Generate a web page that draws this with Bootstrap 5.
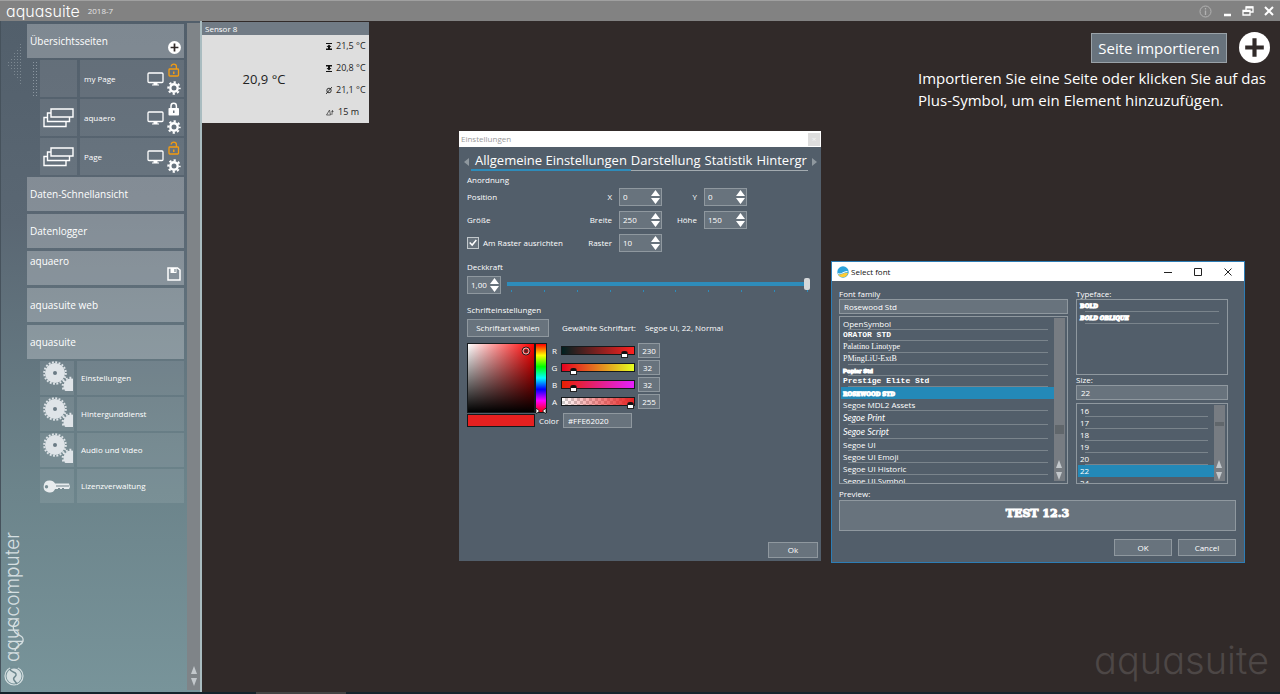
<!DOCTYPE html>
<html lang="de">
<head>
<meta charset="utf-8">
<meta name="viewport" content="width=device-width, initial-scale=1">
<title>aquasuite 2018-7</title>
<link href="https://cdn.jsdelivr.net/npm/bootstrap@5.3.0/dist/css/bootstrap.min.css" rel="stylesheet">
<style>
:root{--panel:#525e6a;--field:#68737d;--edge:#8f989f;--blue:#2e8cba}
body{font-family:"Open Sans","Noto Sans",sans-serif;font-size:8px;line-height:12px;color:#fff;background:#312a29;height:100vh;overflow:hidden}
button,input{font:inherit;color:inherit;border-radius:0}
button{background:none;border:0;padding:0}
svg{display:block;flex:none}
a{color:inherit;text-decoration:none}
.brand{font-family:Inter,Lato,sans-serif;font-feature-settings:"cv11";font-weight:300}
.titlebar{height:21px;background:#828282;border-top:1px solid #a0a0a0;padding:0 5px 0 6px}
.titlebar .brand{font-size:16px;line-height:18px}
.titlebar .ver{font-size:8px;color:#e4e4e4}

/* sidebar */
.side{width:202px;background:linear-gradient(#525f6b,#5a6773 30%,#6c848b 70%,#78949a);border-right:2px solid #a9bcc0;border-left:1px solid #46525c}
.rail{width:26px}
.tri{width:16px;height:48px;margin:19px 0 0 6px;background:radial-gradient(circle,#7d8992 35%,transparent 45%) 0 0/3px 3px;clip-path:polygon(100% 0,100% 100%,0 50%)}
.maker{writing-mode:vertical-rl;transform:rotate(180deg);font-size:19px;line-height:24px;color:#d5dfe1}
.swirl{position:absolute;left:3px;bottom:0}
.menu{width:157px;padding-top:3px;gap:2px}
.head{height:34px;background:#ffffff42;padding:0 3px;font-size:10px}
.heads{gap:3px}
.sub{margin-left:13px;position:relative}
.sub>div{height:37px;gap:3px}
.sub.low>div{height:34px}
.sub{gap:2px}
.tile{width:37px;background:#ffffff18}
.low .tile{width:34px}
.cell{background:#ffffff18;padding:0 3px 0 4px;gap:3px}
.grip{position:absolute;left:-8px;top:1px;width:5px;height:36px;background:radial-gradient(circle,#8b96a0 35%,transparent 45%) 0 0/3px 3px}
.sbar{width:13px;background:#7f8488;margin:2px 0 2px}

/* canvas */
.desk{position:relative;background:#312a29}
.sensor{position:absolute;left:0;top:1px;width:167px;background:#dedede;color:#222}
.sensor header{background:#717b85;color:#fff;line-height:13px;padding:0 3px}
.sensor .big{font-size:13px}
.sensor dl{font-size:9px;line-height:22px;width:43px;white-space:nowrap}
.imp{width:354px;margin:11px 8px 0 0}
.imp p{font-size:15px;line-height:22px}
.imp .tools{gap:12px;padding-right:2px}
.imp .btn{font-size:15px;line-height:20px;padding:4px 6px;height:30px;width:136px;background:#68737d;border:1px solid #9aa2a8;border-radius:0;color:#fff;white-space:nowrap}
.wm{position:absolute;right:11px;bottom:7px;font-size:38px;line-height:50px;color:#4d4746}
.foot{height:2px;background:linear-gradient(90deg,#14232b 20%,#444 20%,#444 27%,#16242c 27%)}

/* windows */
.win{position:absolute;background:var(--panel)}
.w1{left:257px;top:110px;width:362px;height:430px}
.w2{left:629px;top:240px;width:414px;height:302px;border:1px solid #2d7db5}
.w1 .cap{height:16px;background:#fff;color:#999;padding:0 1px 0 2px}
.w2 .cap{height:19px;background:#fff;color:#111;padding:0 11px 0 5px;gap:2px}
.shut{width:12px;height:13px;background:#ddd;color:#f4f4f4}
.tabs{margin:5px 4px 0 5px}
.tabs nav{height:19px;gap:4px;min-width:0;margin:0 4px 0 2px;font-size:13px;line-height:16px;overflow:hidden;white-space:nowrap;background:linear-gradient(#a3abb0,#a3abb0) 0 100%/100% 1px no-repeat}
.tabs nav a:first-child{border-bottom:2px solid var(--blue);padding:0 4px;margin-right:-4px}
.body1{padding:0 3px 3px 8px}
.g{display:grid;grid-template-columns:110px 28px 43px 28px 43px;gap:5px 7px;align-items:center}
.g label{text-align:right}
.spin,.box{background:var(--field);border:1px solid var(--edge)}
.spin{height:18px;padding:0 1px 0 3px}
.spin input,.box input{background:none;border:0;padding:0;min-width:0;width:100%;outline:0}
.chk{appearance:none;width:12px;height:12px;margin:0;border:1px solid #c2c8cc;background:var(--field) url("data:image/svg+xml,%3Csvg xmlns='http://www.w3.org/2000/svg' viewBox='0 0 12 12'%3E%3Cpath d='M2 5.500l3 3 5-6' fill='none' stroke='white' stroke-width='1.800'/%3E%3C/svg%3E")}
.deck{padding-top:10px;padding-bottom:4px;line-height:10px}
.rng{appearance:none;background:none;height:12px;margin:0;width:100%;display:block}
.rng::-webkit-slider-runnable-track{height:4px;background:var(--blue)}
.rng::-webkit-slider-thumb{appearance:none;width:6px;height:12px;margin-top:-4px;background:#d5d8da;border-radius:2px}
.ticks{display:flex;justify-content:space-between;padding:0 2px 0 4px;height:2px}
.ticks i{width:1px;background:var(--blue)}
.fonthead{padding:10px 0 3px}
.picker{margin-top:6px}
.flat{background:var(--field);border:1px solid var(--edge);text-align:center}
.sv{width:68px;height:70px;border:1px solid #15191c;background:linear-gradient(transparent,#000),linear-gradient(90deg,#fff,#f00);position:relative}
.sv svg{position:absolute;right:3px;top:2px}
.hue{width:12px;height:70px;border:1px solid #15191c;background:linear-gradient(red,#ff0,#0f0,#0ff,#00f,#f0f,red);position:relative}
.hue svg{position:absolute;left:0;bottom:-2px}
.swatch{width:68px;height:13px;background:#e62020;border:1px solid #15191c}
.ch{display:grid;grid-template-columns:7px 74px 22px;column-gap:3px;row-gap:2px;align-items:center;align-content:start;text-align:center}
.ch .box{height:15px}
.col{appearance:none;display:block;width:74px;height:9px;margin:0;border:1px solid #15191c}
.col::-webkit-slider-runnable-track{height:7px}
.col::-webkit-slider-thumb{appearance:none;width:7px;height:7px;margin-top:4px;background:#fff;border:1px solid #222;border-top:3px solid #111;border-radius:3px 3px 0 0}
.cr{background:linear-gradient(90deg,#002020,#ff2020)}
.cg{background:linear-gradient(90deg,#e60020,#e6ff20)}
.cb{background:linear-gradient(90deg,#e62000,#e620ff)}
.ca{background:linear-gradient(90deg,transparent,#e62020),repeating-conic-gradient(#ccc 0 25%,#fff 0 50%) 0 0/6px 6px}

.body2{padding:7px 8px 0 7px}
.body2 .fl{line-height:11px}
.lst{border:1px solid var(--edge);overflow:hidden;padding:1px 2px 0 1px}
.lst ul{overflow:hidden}
.lst li{height:12px;line-height:12px;padding-left:2px;white-space:nowrap;background:linear-gradient(#7a848c,#7a848c) 7px 100%/calc(100% - 13px) 1px no-repeat}
.lst li.on{background:#2389b8}
.lst li.s{height:11px;line-height:10px}
.lst li.t{height:14px;line-height:13px}
.lbar{width:11px;background:#777c82;position:relative;margin-bottom:2px}
.lbar svg{position:absolute;bottom:1px;left:1px}
.lbar i{position:absolute;left:1px;right:1px;height:9px;top:107px;background:#60666b}
.lbar i.up{top:17px;height:4px}
.fam{height:168px;margin-top:2px}
.faces{height:76px}
.sizes{height:81px;margin-top:3px}
.prev{height:31px;line-height:25px}
.acts{gap:6px;margin-top:8px}
.acts .flat{width:58px;height:17px}
.rw{font-family:"DejaVu Serif Condensed","DejaVu Serif",serif;font-weight:700;-webkit-text-stroke:1px #fff;text-transform:uppercase;font-size:6px}
.rw.big2{font-size:11px;font-family:"DejaVu Serif",serif}
.poplar{font-family:"Liberation Sans Narrow","Liberation Sans",sans-serif;font-weight:700;-webkit-text-stroke:1px #fff;font-size:6px}
.mono{font-family:"Liberation Mono",monospace;font-weight:700}
.serif{font-family:"Liberation Serif",serif}
.hand{font-family:Lato,sans-serif;font-style:italic;font-size:9px}
</style>
</head>
<body class="d-flex flex-column">
<svg width="0" height="0" class="position-absolute" aria-hidden="true">
<symbol id="mon" viewBox="0 0 17 14"><rect x="1" y="1" width="15" height="9.500" rx="1" fill="none" stroke="#fff" stroke-width="1.300"/><path d="M6.500 11h4v1.500h1.500v1h-7v-1h1.500z" fill="#fff"/></symbol>
<symbol id="gear" viewBox="0 0 14 14"><circle cx="7" cy="7" r="3.700" fill="none" stroke="#fff" stroke-width="2.400"/><circle cx="7" cy="7" r="5.700" fill="none" stroke="#fff" stroke-width="2" stroke-dasharray="2.240 2.240" stroke-dashoffset="1.120"/></symbol>
<symbol id="open" viewBox="0 0 12 14"><rect x="1" y="6" width="9.500" height="7" rx=".8" fill="none" stroke="#f39c12" stroke-width="1.300"/><path d="M3.200 3.600c0-3.400 5.200-3.400 5.200 0v2.400" fill="none" stroke="#f39c12" stroke-width="1.300"/><rect x="5" y="8.500" width="1.500" height="2.500" fill="#f39c12"/></symbol>
<symbol id="shut" viewBox="0 0 12 14"><rect x=".5" y="6" width="10.500" height="7.500" rx=".8" fill="#fff"/><path d="M3 6.500V4c0-3.600 5.400-3.600 5.400 0v2.500" fill="none" stroke="#fff" stroke-width="1.500"/><rect x="5" y="8.500" width="1.500" height="2.500" fill="#68737d"/></symbol>
<symbol id="stack" viewBox="0 0 31 20"><g fill="none" stroke="#fff" stroke-width="1.400"><path d="M8 1h22v8H8z"/><path d="M8 5H4.500v8.500h22V9"/><path d="M4.500 9.500H1V18.500h22v-5"/></g></symbol>
<symbol id="gears" viewBox="0 0 31 31"><g fill="#dfe4e8" stroke="#dfe4e8"><circle cx="13" cy="12" r="10" stroke="none"/><circle cx="13" cy="12" r="10.800" fill="none" stroke-width="2" stroke-dasharray="1.900 1.490"/></g><svg width="31" height="30"><g fill="#dfe4e8" stroke="#dfe4e8"><circle cx="29" cy="25" r="7.500" stroke="none"/><circle cx="29" cy="25" r="8.200" fill="none" stroke-width="2.200" stroke-dasharray="1.900 1.780"/></g></svg><circle cx="13" cy="12" r="2" fill="#6b7b85"/></symbol>
<symbol id="key" viewBox="0 0 28 13"><path d="M6.500 0.500a6 6 0 1 0 5.600 8.500H26l1-2-1-3.500H12.100A6 6 0 0 0 6.500.5zM3.500 5a1.700 1.700 0 1 1 0 3.400 1.700 1.700 0 0 1 0-3.400z" fill="#e8ecee" fill-rule="evenodd"/><path d="M13 6h13M15 9.200l1-1.200 1 1.200M19 9.200l1-1.200 1 1.200" stroke="#6f8189" fill="none"/></symbol>
<symbol id="ud" viewBox="0 0 9 14"><path d="M4.500 0L9 6H0zM4.500 14L9 8H0z" fill="#fff"/></symbol>
<symbol id="sc" viewBox="0 0 8 20"><path d="M4 0L7 8H1zM4 20l3-8H1z" fill="#c3c8cc"/></symbol>
<symbol id="plus" viewBox="0 0 30 30"><circle cx="15" cy="15" r="15" fill="#fff"/><path d="M15 6v18M6 15h18" stroke="#312a29" stroke-width="4"/></symbol>
</svg>

<header class="titlebar d-flex align-items-center flex-shrink-0">
<span class="brand">aquasuite</span><span class="ver ms-2">2018-7</span>
<div class="ms-auto d-flex align-items-center" style="gap:9px">
<button aria-label="Info"><svg width="13" height="13" viewBox="0 0 13 13"><circle cx="6.500" cy="6.500" r="5.500" fill="none" stroke="#b2b2b2"/><path d="M6.500 3v1.500M6.500 5.500V10" stroke="#b2b2b2" stroke-width="1.300"/></svg></button>
<button aria-label="Minimieren"><svg width="12" height="12" viewBox="0 0 12 12"><path d="M3 10h7" stroke="#fff" stroke-width="2.500"/></svg></button>
<button aria-label="Wiederherstellen"><svg width="12" height="12" viewBox="0 0 12 12"><path d="M4 5V2h7v5H8.500M1 5.500h7v4.500H1z" fill="none" stroke="#fff" stroke-width="1.300"/><path d="M4 2.500h7M1 6h7" stroke="#fff" stroke-width="2"/></svg></button>
<button aria-label="Schließen"><svg width="12" height="12" viewBox="0 0 12 12"><path d="M2 2l8 8M10 2l-8 8" stroke="#fff" stroke-width="2"/></svg></button>
</div>
</header>

<div class="d-flex flex-fill" style="min-height:0">
<aside class="side d-flex flex-shrink-0">
<div class="rail d-flex flex-column"><div class="tri"></div>
<div class="mt-auto position-relative"><div class="brand maker">aquacomputer</div><svg class="swirl" width="20" height="46" viewBox="0 0 20 46"><path d="M11 35c1-7 7-5 8-10 1-6-5-5-8-9S9 9 13 4" fill="none" stroke="#d5dfe1" stroke-width="1.300"/></svg></div>
<svg class="mb-1 mt-1" width="26" height="22" viewBox="0 0 26 22"><circle cx="13" cy="10" r="9" fill="none" stroke="#d5dfe1" stroke-width="1.200"/><circle cx="13" cy="10" r="7.500" fill="#d5dfe1"/><path d="M9 3c1 4 5 2 6 5s-4 3-2 6l3 4" fill="none" stroke="#6e888f" stroke-width="1.500"/><path d="M9 1h8" stroke="#748f95" stroke-width="2"/></svg>
</div>
<nav class="menu d-flex flex-column">
<div class="head d-flex align-items-center justify-content-between"><a href="#">Übersichtsseiten</a><button class="align-self-end pb-1" aria-label="Seite hinzufügen"><svg width="13" height="13"><use href="#plus"/></svg></button></div>
<div class="sub d-flex flex-column">
<span class="grip"></span>
<div class="d-flex"><span class="tile"></span><a href="#" class="cell flex-fill d-flex align-items-center"><span class="me-auto">my Page</span><svg width="17" height="14"><use href="#mon"/></svg><span><svg width="12" height="14" class="mx-auto"><use href="#open"/></svg><svg width="14" height="14" class="mt-1"><use href="#gear"/></svg></span></a></div>
<div class="d-flex"><span class="tile d-flex align-items-center justify-content-center"><svg width="31" height="20"><use href="#stack"/></svg></span><a href="#" class="cell flex-fill d-flex align-items-center"><span class="me-auto">aquaero</span><svg width="17" height="14"><use href="#mon"/></svg><span><svg width="12" height="14" class="mx-auto"><use href="#shut"/></svg><svg width="14" height="14" class="mt-1"><use href="#gear"/></svg></span></a></div>
<div class="d-flex"><span class="tile d-flex align-items-center justify-content-center"><svg width="31" height="20"><use href="#stack"/></svg></span><a href="#" class="cell flex-fill d-flex align-items-center"><span class="me-auto">Page</span><svg width="17" height="14"><use href="#mon"/></svg><span><svg width="12" height="14" class="mx-auto"><use href="#open"/></svg><svg width="14" height="14" class="mt-1"><use href="#gear"/></svg></span></a></div>
</div>
<div class="heads d-flex flex-column">
<a href="#" class="head d-flex align-items-center">Daten-Schnellansicht</a>
<a href="#" class="head d-flex align-items-center">Datenlogger</a>
<div class="head d-flex justify-content-between"><a href="#" class="pt-1">aquaero</a><button class="align-self-end pb-1" aria-label="Speichern"><svg width="14" height="14" viewBox="0 0 14 14"><path d="M1 1h9.500L13 3v10H1z" fill="none" stroke="#fff" stroke-width="1.500"/><path d="M3.500 1h6v5h-6z" fill="#fff"/><path d="M8 2v3" stroke="#7b8a92" stroke-width="1.200"/></svg></button></div>
<a href="#" class="head d-flex align-items-center">aquasuite web</a>
<a href="#" class="head d-flex align-items-center">aquasuite</a>
</div>
<div class="sub low d-flex flex-column">
<div class="d-flex"><span class="tile"><svg width="31" height="31" class="mx-auto"><use href="#gears"/></svg></span><a href="#" class="cell flex-fill d-flex align-items-center">Einstellungen</a></div>
<div class="d-flex"><span class="tile"><svg width="31" height="31" class="mx-auto"><use href="#gears"/></svg></span><a href="#" class="cell flex-fill d-flex align-items-center">Hintergunddienst</a></div>
<div class="d-flex"><span class="tile"><svg width="31" height="31" class="mx-auto"><use href="#gears"/></svg></span><a href="#" class="cell flex-fill d-flex align-items-center">Audio und Video</a></div>
<div class="d-flex"><span class="tile d-flex align-items-center justify-content-center"><svg width="28" height="13"><use href="#key"/></svg></span><a href="#" class="cell flex-fill d-flex align-items-center">Lizenzverwaltung</a></div>
</div>
</nav>
<div class="sbar ms-auto d-flex align-items-end justify-content-center pb-1"><svg width="8" height="20"><use href="#sc"/></svg></div>
</aside>

<main class="desk flex-fill overflow-hidden">
<section class="sensor"><header>Sensor 8</header>
<div class="d-flex align-items-center"><div class="big flex-fill text-center">20,9 °C</div>
<dl class="mb-0">
<div class="d-flex align-items-center gap-1"><dt><svg width="6" height="7" viewBox="0 0 6 7"><path d="M0 0h6v1H0zM3 1.500L5.500 4H4v1.500h2V7H0V5.500h2V4H.5z" fill="#111"/></svg></dt><dd class="m-0">21,5 °C</dd></div>
<div class="d-flex align-items-center gap-1"><dt><svg width="6" height="7" viewBox="0 0 6 7"><path d="M0 6h6v1H0zM3 5.500L.5 3H2V1.500H0V0h6v1.500H4V3h1.500z" fill="#111"/></svg></dt><dd class="m-0">20,8 °C</dd></div>
<div class="d-flex align-items-center gap-1"><dt><svg width="6" height="7" viewBox="0 0 6 7"><path d="M0 7l6-7" stroke="#222" stroke-width=".9"/><ellipse cx="3" cy="3.500" rx="2.200" ry="2.300" fill="none" stroke="#222" stroke-width=".9"/></svg></dt><dd class="m-0">21,1 °C</dd></div>
<div class="d-flex align-items-center gap-1"><dt><svg width="8" height="7" viewBox="0 0 8 7"><path d="M.5 6L3.500 1l1 5zM6.500 1L5.800 6M5.500 2.500h2" fill="none" stroke="#444" stroke-width=".8"/></svg></dt><dd class="m-0">15 m</dd></div>
</dl></div>
</section>

<section class="imp ms-auto d-flex flex-column">
<div class="tools d-flex justify-content-end align-items-center"><button class="btn">Seite importieren</button><button aria-label="Element hinzufügen"><svg width="31" height="31"><use href="#plus"/></svg></button></div>
<p class="mb-0 mt-1 text-nowrap">Importieren Sie eine Seite oder klicken Sie auf das<br>Plus-Symbol, um ein Element hinzuzufügen.</p>
</section>
<div class="wm brand">aquasuite</div>

<section class="win w1 d-flex flex-column">
<div class="cap d-flex align-items-center justify-content-between"><span>Einstellungen</span><button class="shut text-center" aria-label="Schließen">×</button></div>
<div class="tabs d-flex align-items-center"><svg width="5" height="8" viewBox="0 0 5 8"><path d="M5 0v8L0 4z" fill="#8f989f"/></svg>
<nav class="d-flex flex-fill"><a href="#">Allgemeine Einstellungen</a><a href="#">Darstellung</a><a href="#">Statistik</a><a href="#">Hintergr</a></nav>
<svg width="5" height="8" viewBox="0 0 5 8"><path d="M0 0v8l5-4z" fill="#8f989f"/></svg></div>
<div class="body1 flex-fill d-flex flex-column">
<div class="mt-1 pb-1" style="line-height:9px">Anordnung</div>
<div class="g">
<span>Position</span><label for="px">X</label><span class="spin d-flex align-items-center"><input id="px" value="0"><svg width="9" height="14"><use href="#ud"/></svg></span><label for="py">Y</label><span class="spin d-flex align-items-center"><input id="py" value="0"><svg width="9" height="14"><use href="#ud"/></svg></span>
<span>Größe</span><label for="gw">Breite</label><span class="spin d-flex align-items-center"><input id="gw" value="250"><svg width="9" height="14"><use href="#ud"/></svg></span><label for="gh">Höhe</label><span class="spin d-flex align-items-center"><input id="gh" value="150"><svg width="9" height="14"><use href="#ud"/></svg></span>
<span class="d-flex align-items-center gap-1"><input class="chk" type="checkbox" id="ra" checked><label for="ra" class="text-nowrap">Am Raster ausrichten</label></span><label for="rs">Raster</label><span class="spin d-flex align-items-center"><input id="rs" value="10"><svg width="9" height="14"><use href="#ud"/></svg></span>
</div>
<label class="deck" for="dk">Deckkraft</label>
<div class="d-flex align-items-center pe-2" style="gap:6px"><span class="spin d-flex align-items-center flex-shrink-0" style="width:34px"><input value="1,00" aria-label="Deckkraft Wert"><svg width="9" height="14"><use href="#ud"/></svg></span><div class="flex-fill"><input id="dk" type="range" class="rng" min="0" max="1" step="0.01" value="1"><div class="ticks"><i></i><i></i><i></i><i></i><i></i><i></i><i></i><i></i><i></i><i></i></div></div></div>
<div class="fonthead">Schrifteinstellungen</div>
<div class="d-flex align-items-center" style="gap:9px"><button class="flat" style="width:82px;height:18px">Schriftart wählen</button><span class="ms-1">Gewählte Schriftart:</span><span>Segoe UI, 22, Normal</span></div>
<div class="picker d-flex">
<div class="sv"><svg width="10" height="10" viewBox="0 0 10 10"><circle cx="5" cy="5" r="4" fill="none" stroke="#222"/><circle cx="5" cy="5" r="3" fill="none" stroke="#ddd" stroke-width=".8"/><path d="M5 3v4M3 5h4" stroke="#222"/></svg></div>
<div class="hue"><svg width="10" height="6" viewBox="0 0 10 6"><path d="M0 0l3.500 3L0 6zM10 0L6.500 3 10 6z" fill="#fff" stroke="#111" stroke-width=".8"/></svg></div>
<div class="ch ms-1">
<label for="cr">R</label><input id="cr" type="range" class="col cr p-0" max="255" value="230"><span class="box d-flex"><input class="text-center" value="230" aria-label="R Wert"></span>
<label for="cg">G</label><input id="cg" type="range" class="col cg p-0" max="255" value="32"><span class="box d-flex"><input class="ps-1" value="32" aria-label="G Wert"></span>
<label for="cb">B</label><input id="cb" type="range" class="col cb p-0" max="255" value="32"><span class="box d-flex"><input class="ps-1" value="32" aria-label="B Wert"></span>
<label for="ca">A</label><input id="ca" type="range" class="col ca p-0" max="255" value="255"><span class="box d-flex"><input class="text-center" value="255" aria-label="A Wert"></span>
</div></div>
<div class="d-flex align-items-center gap-1"><span class="swatch"></span><label for="hx">Color</label><span class="box d-flex" style="width:69px;height:15px"><input id="hx" class="ps-1" value="#FFE62020"></span></div>
<button class="flat mt-auto align-self-end" style="width:50px;height:16px">Ok</button>
</div>
</section>

<section class="win w2 d-flex flex-column">
<div class="cap d-flex align-items-center"><svg width="12" height="12" viewBox="0 0 12 12"><circle cx="6" cy="6" r="5.700" fill="#2ba3dc"/><path d="M1 8c3 2 6-2 10-1-1 5-8 6-10 1z" fill="#fc3"/><path d="M1 7c3 2 5-2 9-2l1 1c-4 0-6 3-10 2z" fill="#fff"/></svg><span class="me-auto">Select font</span>
<div class="d-flex" style="gap:20px"><button aria-label="Minimize"><svg width="10" height="10" viewBox="0 0 10 10"><path d="M1 5.500h8" stroke="#222"/></svg></button><button aria-label="Maximize"><svg width="10" height="10" viewBox="0 0 10 10"><path d="M1.500 1.500h7v7h-7z" fill="none" stroke="#222"/></svg></button><button aria-label="Close"><svg width="10" height="10" viewBox="0 0 10 10"><path d="M1.500 1.500l7 7M8.500 1.500l-7 7" stroke="#222"/></svg></button></div></div>
<div class="body2 flex-fill d-flex flex-column">
<div class="d-flex gap-2">
<div class="d-flex flex-column" style="width:229px"><label class="fl" for="ff">Font family</label>
<span class="box d-flex" style="height:15px"><input id="ff" class="ps-1" value="Rosewood Std"></span>
<div class="lst fam d-flex"><ul class="list-unstyled mb-0 flex-fill">
<li>OpenSymbol<li class="s mono">ORATOR STD<li class="serif">Palatino Linotype<li class="serif">PMingLiU-ExtB<li class="s"><span class="poplar">Poplar Std</span><li class="s mono">Prestige Elite Std<li class="on"><span class="rw">Rosewood Std</span><li>Segoe MDL2 Assets<li class="t hand">Segoe Print<li class="t hand">Segoe Script<li>Segoe UI<li>Segoe UI Emoji<li>Segoe UI Historic<li>Segoe UI Symbol
</ul><div class="lbar"><i></i><svg width="8" height="20"><use href="#sc"/></svg></div></div></div>
<div class="d-flex flex-column" style="width:152px"><span class="fl">Typeface:</span>
<div class="lst faces"><ul class="list-unstyled mb-0"><li class="s rw">Bold<li class="rw fst-italic">Bold Oblique</ul></div>
<label style="line-height:10px" for="sz">Size:</label><span class="box d-flex" style="height:15px"><input id="sz" class="ps-1" value="22"></span>
<div class="lst sizes d-flex"><ul class="list-unstyled mb-0 flex-fill"><li>16<li>17<li>18<li>19<li>20<li class="on">22<li>24</ul><div class="lbar"><i class="up"></i><svg width="8" height="20"><use href="#sc"/></svg></div></div></div>
</div>
<div class="mt-1">Preview:</div>
<div class="flat prev"><span class="rw big2">Test 12.3</span></div>
<div class="acts d-flex justify-content-end"><button class="flat">OK</button><button class="flat">Cancel</button></div>
</div>
</section>
</main>
</div>
<div class="foot flex-shrink-0"></div>
<script src="https://cdn.jsdelivr.net/npm/bootstrap@5.3.0/dist/js/bootstrap.bundle.min.js"></script>
</body>
</html>
